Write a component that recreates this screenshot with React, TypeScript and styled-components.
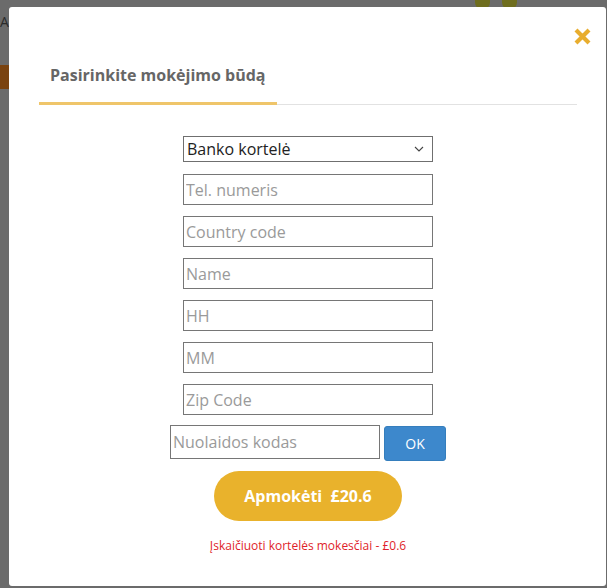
import React from "react";
import styled, { createGlobalStyle } from "styled-components";

const Global = createGlobalStyle`
  html, body { margin: 0; padding: 0; }
  body {
    width: 607px;
    height: 588px;
    overflow: hidden;
    background: #6b6b6b;
    font-family: "Open Sans", "Noto Sans", sans-serif;
  }
  * { box-sizing: border-box; }
`;

const Page = styled.div`
  position: relative;
  width: 607px;
  height: 588px;
  padding: 7px 1px 0 9px;
`;

const BgLetter = styled.span`
  position: absolute;
  left: 0;
  top: 12px;
  font-size: 14px;
  color: #2a2a2a;
  font-family: "Open Sans", sans-serif;
`;

const BgTab = styled.div`
  position: absolute;
  left: 0;
  top: 65px;
  width: 9px;
  height: 24px;
  background: #7a4310;
`;

const BgBlob = styled.div<{ $x: number }>`
  position: absolute;
  left: ${(p) => p.$x}px;
  top: -20px;
  width: 15px;
  height: 30px;
  border-radius: 8px;
  background: #6e6d1e;
`;

const Modal = styled.div`
  position: relative;
  width: 597px;
  height: 579px;
  background: #fff;
  border-radius: 3px;
  padding: 57px 29px 0 30px;
`;

const Close = styled.button`
  position: absolute;
  top: 19px;
  right: 14px;
  width: 20px;
  height: 20px;
  padding: 0;
  border: none;
  background: transparent;
  display: flex;
  align-items: center;
  justify-content: center;
  cursor: pointer;
`;

const Tabs = styled.div`
  display: flex;
  border-bottom: 1px solid #e2e2e2;
`;

const Tab = styled.div`
  padding: 0 11px 16px;
  margin-bottom: -1px;
  font-size: 16px;
  line-height: 22px;
  font-weight: 700;
  color: #666;
  border-bottom: 3px solid #efc56a;
`;

const Form = styled.div`
  display: flex;
  flex-direction: column;
  align-items: center;
  margin-top: 31px;
`;

const Fields = styled.div`
  display: flex;
  flex-direction: column;
  gap: 11px;
  width: 250px;
`;

const SelectBox = styled.div`
  position: relative;
  height: 26px;
  border: 1px solid #6f6f6f;
  display: flex;
  align-items: center;
  padding: 0 8px 0 3px;
  font-size: 16px;
  color: #222;
  margin-bottom: 1px;
`;

const Chevron = styled.span`
  margin-left: auto;
  display: flex;
`;

const Input = styled.input<{ $w?: number }>`
  height: 31px;
  width: ${(p) => (p.$w ? `${p.$w}px` : "100%")};
  border: 1px solid #767676;
  padding: 0 2px;
  font-family: "Open Sans", "Noto Sans", sans-serif;
  font-size: 16px;
  color: #333;
  outline: none;
  &::placeholder { color: #9a9a9a; }
`;

const DiscountRow = styled.div`
  display: flex;
  align-items: flex-start;
  gap: 4px;
  margin-top: 10px;
`;

const DiscountInput = styled(Input)`
  height: 34px;
`;

const OkButton = styled.button`
  width: 62px;
  height: 35px;
  border: 1px solid #357ebd;
  border-radius: 3px;
  background: #3d88cc;
  color: #fff;
  font-family: "Open Sans", "Noto Sans", sans-serif;
  font-size: 14px;
  margin-top: 1px;
`;

const PayButton = styled.button`
  margin-top: 10px;
  width: 188px;
  height: 50px;
  border: none;
  border-radius: 25px;
  background: #e9b22c;
  color: #fff;
  font-family: "Open Sans", "Noto Sans", sans-serif;
  font-size: 16px;
  font-weight: 700;
  white-space: pre;
`;

const Note = styled.div`
  margin-top: 16px;
  font-size: 12px;
  color: #e01e2a;
`;

export default function App() {
  const fields = ["Tel. numeris", "Country code", "Name", "HH", "MM", "Zip Code"];
  return (
    <>
      <Global />
      <Page>
        <BgLetter>A</BgLetter>
        <BgTab />
        <BgBlob $x={475} />
        <BgBlob $x={502} />
        <Modal>
          <Close aria-label="close">
            <svg width="19" height="19" viewBox="0 0 19 19">
              <path d="M3 3 L16 16 M16 3 L3 16" stroke="#e8ad2e" strokeWidth="4.2" strokeLinecap="butt" />
            </svg>
          </Close>
          <Tabs>
            <Tab>Pasirinkite mokėjimo būdą</Tab>
          </Tabs>
          <Form>
            <Fields>
              <SelectBox>
                Banko kortelė
                <Chevron>
                  <svg width="10" height="6" viewBox="0 0 10 6">
                    <path d="M1 1 L5 5 L9 1" stroke="#444" strokeWidth="1.1" fill="none" />
                  </svg>
                </Chevron>
              </SelectBox>
              {fields.map((f) => (
                <Input key={f} placeholder={f} />
              ))}
            </Fields>
            <DiscountRow>
              <DiscountInput $w={210} placeholder="Nuolaidos kodas" />
              <OkButton>OK</OkButton>
            </DiscountRow>
            <PayButton>{"Apmokėti  £20.6"}</PayButton>
            <Note>Įskaičiuoti kortelės mokesčiai - £0.6</Note>
          </Form>
        </Modal>
      </Page>
    </>
  );
}
